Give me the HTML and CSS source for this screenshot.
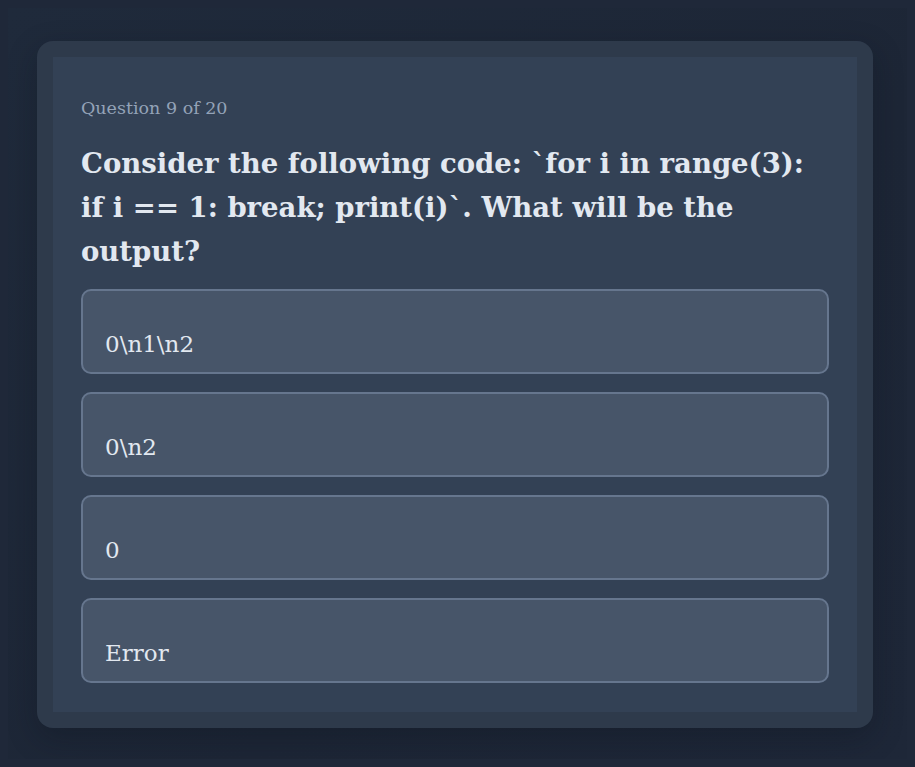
FILE: index.html
```html
<!DOCTYPE html>
<html lang="en">
<head>
<meta charset="utf-8">
<title>Quiz</title>
<link rel="stylesheet" href="styles.css">
</head>
<body>
<main class="page">
  <section class="card">
    <div class="card-inner">
      <p class="progress">Question 9 of 20</p>
      <h1 class="question">Consider the following code: `for i in range(3): if i == 1: break; print(i)`. What will be the output?</h1>
      <div class="options">
        <button class="option">0\n1\n2</button>
        <button class="option">0\n2</button>
        <button class="option">0</button>
        <button class="option">Error</button>
      </div>
    </div>
  </section>
</main>
</body>
</html>
```
FILE: styles.css
```css
html {
  background: #1f2839;
}
body {
  margin: 8px;
  min-height: calc(100vh - 16px);
  box-sizing: border-box;
  background: linear-gradient(135deg, #1f2a3b 0%, #1d2636 60%, #1e2738 100%);
  font-family: "DejaVu Serif", "Liberation Serif", serif;
  color: #e2e8f0;
}
.page {
  padding: 33px 0 0 29px;
}
.card {
  width: 836px;
  box-sizing: border-box;
  padding: 16px;
  background: #2e3a4b;
  border-radius: 16px;
  box-shadow: 0 10px 30px rgba(10, 15, 25, 0.3);
}
.card-inner {
  background: #334155;
  padding: 38px 28px 29px;
}
.progress {
  margin: 0;
  font-size: 17.5px;
  line-height: 26px;
  color: #94a3b8;
}
.question {
  margin: 20px 0 16px;
  font-size: 27.5px;
  line-height: 44px;
  font-weight: 700;
  color: #e2e8f0;
}
.options {
  display: flex;
  flex-direction: column;
  gap: 18px;
}
.option {
  height: 85px;
  box-sizing: border-box;
  padding: 35px 22px 11px;
  text-align: left;
  font-family: inherit;
  font-size: 23px;
  line-height: 36px;
  color: #e2e8f0;
  background: #475569;
  border: 2px solid #66768e;
  border-radius: 10px;
}
```
